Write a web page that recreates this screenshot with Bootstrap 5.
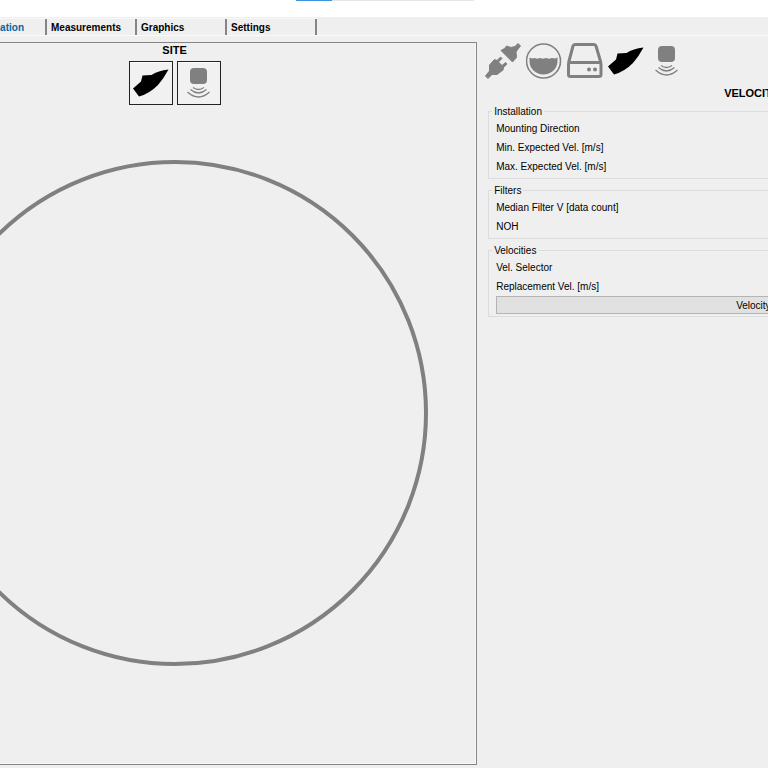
<!DOCTYPE html>
<html lang="en">
<head>
<meta charset="utf-8">
<meta name="viewport" content="width=device-width, initial-scale=1">
<title>Site configuration</title>
<link href="https://cdn.jsdelivr.net/npm/bootstrap@5.3.0/dist/css/bootstrap.min.css" rel="stylesheet">
<style>
  body { background: #efefef; color: #000; font-family: "Liberation Sans", Arial, sans-serif; font-size: 10px; line-height: 14px; }
  .titlebar { height: 17px; background: #fff; padding-left: 296px; }
  .load-track { width: 178px; height: 1px; background: #e6e6e6; border-radius: 0; }
  .load-track .progress-bar { width: 20%; background: #3c93e0; }
  .tabs { height: 19px; padding-top: 2px; border-bottom: 1px solid #fbfbfb; }
  .tab { width: 90px; height: 16px; padding: 1px 4px 0; border: 0; border-right: 2px solid #858585; background: #efefef; color: #000; font-weight: 700; text-align: left; line-height: 16px; box-shadow: 0 -1px #f8f8f8; }
  .tab.current { width: 47px; padding: 1px 21px 0 0; color: #0b63a0; text-align: right; }
  .workspace { padding: 6px 0 3px; }
  .site-pane { flex: 0 0 calc(62% + 1px); border: 1px solid #858585; border-left: 0; box-shadow: inset -1px -1px #f8f8f8; }
  .site-content { margin-left: -127px; }
  .heading { font-size: 11px; line-height: 14px; font-weight: 700; }
  .tool { width: 44px; height: 44px; padding: 3px; border: 1px solid #222; background: #f1f1f1; box-shadow: inset 0 1px #fff; }
  .compass { margin-top: 55px; }
  .options { padding-left: 8px; }
  .devices { gap: 5px; padding-top: 1px; }
  .device { padding: 0; border: 0; background: none; }
  svg { display: block; }
  .velocity-title { padding: 7px 0 4px 239px; }
  .groups { gap: 4px; padding-left: 3px; }
  .group { border: 1px solid #dcdcdc; border-right: 0; padding: 1px 0 2px 7px; }
  .group legend { float: none; width: auto; height: 14px; margin: 0 0 0 -4px; padding: 0 2px; font-size: 10px; line-height: 16px; }
  .option { height: 19px; line-height: 19px; }
  .velocity-btn { height: 18px; padding: 1px 0 0 239px; border: 1px solid #b4b4b4; border-right: 0; background: #e1e1e1; line-height: 16px; text-align: left; }
</style>
<script src="https://cdn.jsdelivr.net/npm/bootstrap@5.3.0/dist/js/bootstrap.bundle.min.js"></script>
</head>
<body class="overflow-hidden">
<svg width="0" height="0" class="position-absolute" aria-hidden="true">
  <symbol id="boat" viewBox="0 0 36 36"><path d="M0 23.500 6 31.500Q16 29 25 20 31 13 35.500 4.500 25 5.500 18.500 10L9.500 10.500 8 16.500Z" fill="#000"/></symbol>
  <symbol id="sensor" viewBox="0 0 36 36"><rect x="9" y="3" width="17" height="16" rx="4" fill="#808080"/><path d="M12 22.500Q17.500 26.500 23 22.500M9.500 24.500Q17.500 31.500 25.500 24.500M6.500 27Q17.500 37 28.500 27" fill="none" stroke="#808080" stroke-width="1.300"/></symbol>
</svg>
<div class="d-flex flex-column min-vh-100">
  <header>
    <div class="titlebar"><div class="progress load-track"><div class="progress-bar"></div></div></div>
    <nav class="tabs d-flex" aria-label="Sections">
      <button type="button" class="tab current" aria-current="page">ation</button>
      <button type="button" class="tab">Measurements</button>
      <button type="button" class="tab">Graphics</button>
      <button type="button" class="tab">Settings</button>
    </nav>
  </header>
  <main class="workspace d-flex flex-grow-1">
    <section class="site-pane overflow-hidden">
      <div class="site-content d-flex flex-column align-items-center">
        <h1 class="heading mb-1">SITE</h1>
        <div class="d-flex gap-1">
          <button type="button" class="tool" aria-label="Boat"><svg width="36" height="36"><use href="#boat"/></svg></button>
          <button type="button" class="tool" aria-label="Sensor"><svg width="36" height="36"><use href="#sensor"/></svg></button>
        </div>
        <svg class="compass" width="506" height="506" viewBox="0 0 506 506"><circle cx="253" cy="253" r="251" fill="none" stroke="#808080" stroke-width="4"/></svg>
      </div>
    </section>
    <section class="options flex-fill overflow-hidden">
      <div class="devices d-flex">
        <button type="button" class="device" aria-label="Connection"><svg width="36" height="36" viewBox="0 0 36 36"><g fill="#808080" stroke="#808080" stroke-linejoin="round"><path d="M.5 33 3 35.500 7 31.500 12 31.500 18 27 18.500 24.500 22 21 20.500 19.500 17 22.500 13.500 19 17 15.500 15.500 14 12 17.500 9.500 16.500 4.500 22 4.500 28Z"/><path d="M16 7.500 27.500 19 31.500 14.500 31 9 33 6 35.500 3 33 .5 30 3.500 26 4.500 21.500 3 19.500 5.500Z"/></g></svg></button>
        <button type="button" class="device" aria-label="Water level"><svg width="36" height="36" viewBox="0 0 36 36"><circle cx="17.500" cy="18" r="17" fill="none" stroke="#808080" stroke-width="1.600"/><path d="M3.500 14.500 6 15.500 8.500 15 11 15.800 14 15 17 15.800 20 15 23 15.800 26 15 29 15.500 31.500 14.500V18C31.500 26 25 31.500 17.500 31.500S3.500 26 3.500 18Z" fill="#808080"/></svg></button>
        <button type="button" class="device" aria-label="Storage"><svg width="36" height="36" viewBox="0 0 36 36"><g fill="none" stroke="#808080" stroke-width="3" stroke-linejoin="round"><path d="M1.500 20 6 3Q6.500 1.500 8 1.500H27Q28.500 1.500 29 3L34 20"/><rect x="1.500" y="19.500" width="32.500" height="14" rx="2"/></g><circle cx="22" cy="26.500" r="2" fill="#808080"/><circle cx="28" cy="26.500" r="2" fill="#808080"/></svg></button>
        <button type="button" class="device" aria-label="Boat"><svg width="36" height="36"><use href="#boat"/></svg></button>
        <button type="button" class="device" aria-label="Sensor"><svg width="36" height="36"><use href="#sensor"/></svg></button>
      </div>
      <h2 class="heading velocity-title mb-0">VELOCITY</h2>
      <div class="groups d-flex flex-column">
        <fieldset class="group">
          <legend>Installation</legend>
          <div class="option">Mounting Direction</div>
          <div class="option">Min. Expected Vel. [m/s]</div>
          <div class="option">Max. Expected Vel. [m/s]</div>
        </fieldset>
        <fieldset class="group">
          <legend>Filters</legend>
          <div class="option">Median Filter V [data count]</div>
          <div class="option">NOH</div>
        </fieldset>
        <fieldset class="group">
          <legend>Velocities</legend>
          <div class="option">Vel. Selector</div>
          <div class="option">Replacement Vel. [m/s]</div>
          <button type="button" class="velocity-btn d-block w-100">Velocity</button>
        </fieldset>
      </div>
    </section>
  </main>
</div>
</body>
</html>
